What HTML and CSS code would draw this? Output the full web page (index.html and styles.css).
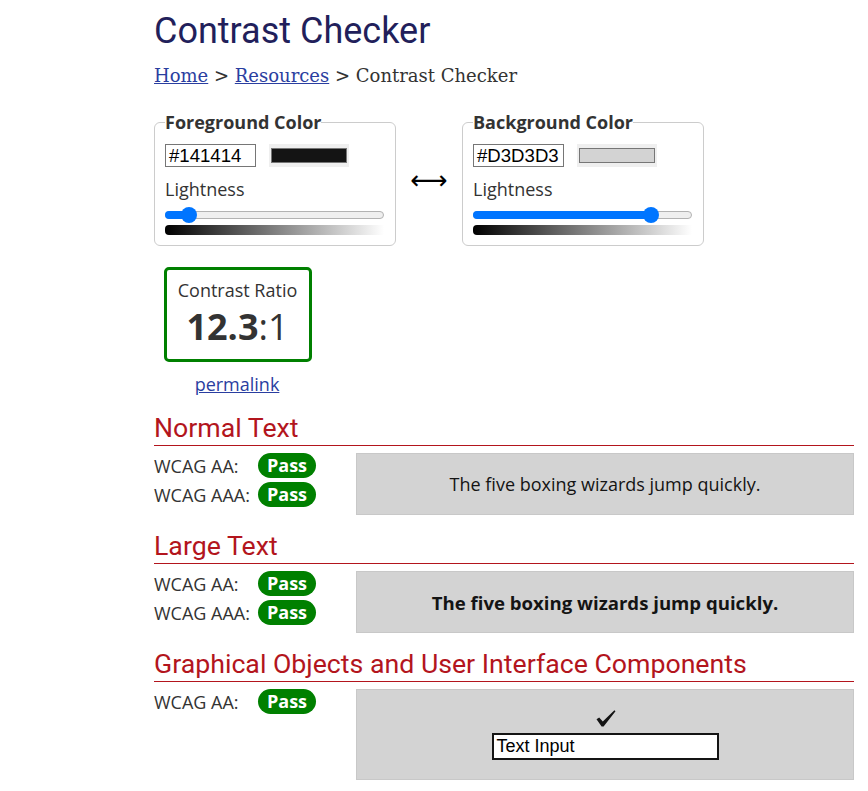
FILE: index.html
```html
<!DOCTYPE html>
<html lang="en">
<head>
<meta charset="utf-8">
<title>Contrast Checker</title>
<link rel="stylesheet" href="styles.css">
</head>
<body>
<main class="page">
  <h1 class="title">Contrast Checker</h1>
  <nav class="crumbs"><a href="#">Home</a> &gt; <a href="#">Resources</a> &gt; Contrast Checker</nav>

  <div class="pickers">
    <fieldset class="picker">
      <legend>Foreground Color</legend>
      <div class="hexrow">
        <span class="hex">#141414</span>
        <span class="swatch"><span class="swatch-in fg"></span></span>
      </div>
      <div class="light">Lightness</div>
      <div class="slider"><span class="fill" style="width:23px"></span><span class="thumb" style="left:15px"></span></div>
      <div class="grad"></div>
    </fieldset>
    <div class="swap">&#x27F7;</div>
    <fieldset class="picker">
      <legend>Background Color</legend>
      <div class="hexrow">
        <span class="hex">#D3D3D3</span>
        <span class="swatch"><span class="swatch-in bg"></span></span>
      </div>
      <div class="light">Lightness</div>
      <div class="slider"><span class="fill" style="width:177px"></span><span class="thumb" style="left:169px"></span></div>
      <div class="grad"></div>
    </fieldset>
  </div>

  <div class="ratio-wrap">
    <div class="ratio">
      <div class="ratio-label">Contrast Ratio</div>
      <div class="ratio-val"><b>12.3</b>:1</div>
    </div>
    <a class="permalink" href="#">permalink</a>
  </div>

  <section class="sect">
    <h2>Normal Text</h2>
    <div class="res">
      <div class="checks">
        <div class="chk"><span class="lbl">WCAG AA:</span><span class="pass">Pass</span></div>
        <div class="chk"><span class="lbl">WCAG AAA:</span><span class="pass">Pass</span></div>
      </div>
      <div class="sample normal">The five boxing wizards jump quickly.</div>
    </div>
  </section>

  <section class="sect">
    <h2>Large Text</h2>
    <div class="res">
      <div class="checks">
        <div class="chk"><span class="lbl">WCAG AA:</span><span class="pass">Pass</span></div>
        <div class="chk"><span class="lbl">WCAG AAA:</span><span class="pass">Pass</span></div>
      </div>
      <div class="sample large">The five boxing wizards jump quickly.</div>
    </div>
  </section>

  <section class="sect">
    <h2>Graphical Objects and User Interface Components</h2>
    <div class="res">
      <div class="checks">
        <div class="chk"><span class="lbl">WCAG AA:</span><span class="pass">Pass</span></div>
      </div>
      <div class="sample ui">
        <svg class="tick" width="20" height="17" viewBox="0 0 20 17" aria-hidden="true"><path d="M0.5 9.2 L3.2 7.6 L6.8 11.6 L18.4 0.3 L19.5 1.2 L7.6 16.4 L5.6 16.4 Z" fill="#141414"/></svg>
        <span class="tinput">Text Input</span>
      </div>
    </div>
  </section>
</main>
</body>
</html>
```

FILE: styles.css
```css
* { box-sizing: border-box; }
body {
  margin: 0;
  background: #fff;
  font-family: "Open Sans", sans-serif;
  color: #333;
}
.page {
  width: 700px;
  margin-left: 154px;
}
.title {
  font-family: Roboto, sans-serif;
  font-weight: 400;
  font-size: 36px;
  line-height: 42px;
  color: #221f5b;
  margin: 10px 0 0;
}
.crumbs {
  font-family: "DejaVu Serif", serif;
  font-size: 18px;
  line-height: 24px;
  color: #333;
  margin-top: 12px;
}
.crumbs a { color: #2a3ea0; }

.pickers {
  display: flex;
  align-items: center;
  margin-top: 22px;
}
.picker {
  width: 242px;
  margin: 0;
  padding: 0 10px 10px;
  border: 1px solid #ccc;
  border-radius: 6px;
}
.picker legend {
  padding: 0;
  font-weight: 700;
  font-size: 18px;
  line-height: 24px;
  color: #333;
}
.hexrow {
  display: flex;
  gap: 13px;
  margin-top: 10px;
}
.hex {
  height: 23px;
  padding: 0 0 0 3px;
  border: 1px solid #767676;
  font-family: "Liberation Sans", Arial, sans-serif;
  font-size: 18.6px;
  line-height: 21px;
  color: #000;
  background: #fff;
  white-space: nowrap;
  overflow: hidden;
}
.picker .hex { width: 91px; }
.swatch {
  width: 80px;
  height: 23px;
  background: #efefef;
  padding: 4px 2px 4px 2px;
  display: flex;
}
.swatch-in {
  flex: 1;
  border: 1px solid #767676;
}
.swatch-in.fg { background: #141414; }
.swatch-in.bg { background: #d3d3d3; }
.light {
  font-size: 18px;
  line-height: 24px;
  margin-top: 10px;
  color: #333;
}
.slider {
  position: relative;
  width: 219px;
  height: 8px;
  margin-top: 10px;
  background: #efefef;
  border: 1px solid #b2b2b2;
  border-radius: 4px;
}
.fill {
  position: absolute;
  left: -1px;
  top: -1px;
  height: 8px;
  background: #0075ff;
  border-radius: 4px;
}
.thumb {
  position: absolute;
  top: -5px;
  width: 16px;
  height: 16px;
  border-radius: 50%;
  background: #0075ff;
}
.grad {
  width: 219px;
  height: 10px;
  margin-top: 6px;
  background: linear-gradient(to right, #000, #fff);
  border-radius: 4px 0 0 4px;
}
.swap {
  width: 66px;
  text-align: center;
  font-family: "DejaVu Sans", sans-serif;
  font-size: 26px;
  line-height: 30px;
  color: #000;
  margin-top: 4px;
}

.ratio-wrap {
  width: 166px;
  margin-top: 21px;
  display: flex;
  flex-direction: column;
  align-items: center;
}
.ratio {
  width: 148px;
  height: 95px;
  margin-left: 1px;
  border: 3px solid #008000;
  border-radius: 5px;
  text-align: center;
  color: #333;
}
.ratio-label {
  font-size: 18px;
  line-height: 24px;
  margin-top: 8px;
}
.ratio-val {
  font-size: 36px;
  line-height: 42px;
  font-weight: 400;
  margin-top: 4px;
}
.ratio-val b { font-weight: 700; }
.permalink {
  margin-top: 10px;
  font-size: 18px;
  line-height: 24px;
  color: #2a3ea0;
}

.sect h2 {
  font-family: Roboto, sans-serif;
  font-weight: 400;
  font-size: 26.7px;
  line-height: 32px;
  color: #b3151d;
  margin: 0;
  padding-bottom: 1px;
  border-bottom: 1px solid #b3151d;
}
.sect:first-of-type h2 { margin-top: 16px; }
.sect + .sect h2 { margin-top: 15px; }
.res {
  display: flex;
  margin-top: 7px;
}
.checks {
  width: 202px;
  display: flex;
  flex-direction: column;
  gap: 4px;
}
.chk {
  display: flex;
  align-items: center;
  height: 25px;
}
.lbl {
  width: 104px;
  font-size: 18px;
  color: #333;
}
.pass {
  width: 58px;
  height: 25px;
  border-radius: 13px;
  background: #008000;
  color: #fff;
  font-weight: 700;
  font-size: 18px;
  line-height: 25px;
  text-align: center;
}
.sample {
  flex: 1;
  background: #d3d3d3;
  border: 1px solid #c8c8c8;
  color: #141414;
  display: flex;
  align-items: center;
  justify-content: center;
}
.sample.normal { height: 62px; font-size: 18px; }
.sample.large { height: 62px; font-size: 18.6px; font-weight: 700; }
.sample.ui {
  height: 91px;
  flex-direction: column;
  justify-content: flex-start;
  padding-top: 20px;
}
.tick {
  display: block;
  margin-left: 2px;
}
.tinput {
  width: 227px;
  height: 27px;
  margin-top: 6px;
  border: 2px solid #141414;
  background: #fff;
  padding: 0 3px;
  font-family: "Liberation Sans", Arial, sans-serif;
  font-size: 18px;
  line-height: 23px;
  color: #000;
}
```
